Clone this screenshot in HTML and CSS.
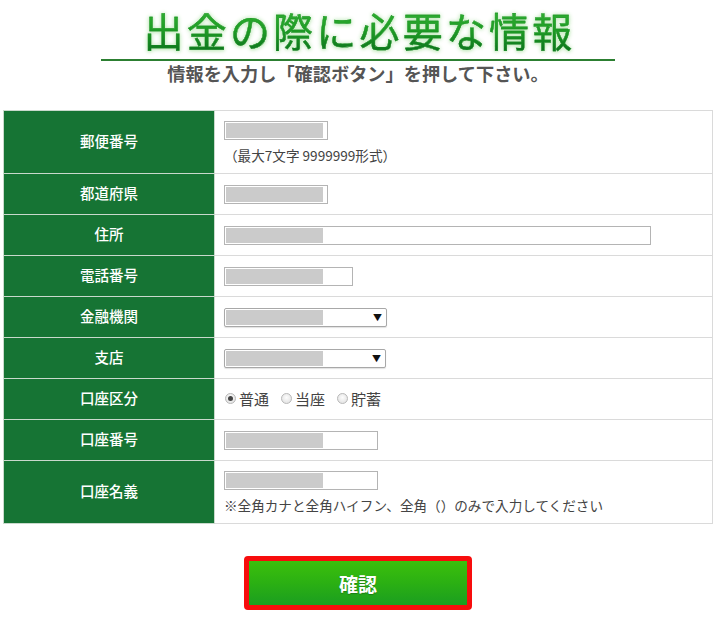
FILE: index.html
```html
<!DOCTYPE html>
<html lang="ja">
<head>
  <meta charset="UTF-8" />
  <title>出金の際に必要な情報</title>
  <link rel="stylesheet" href="styles.css">
</head>
<body>
  <header class="page-head">
    <h1 class="title"><span class="title-text">出金の際に必要な情報</span></h1>
    <p class="lead">情報を入力し「確認ボタン」を押して下さい。</p>
  </header>

  <form class="withdraw-form">
    <table class="info-table">
      <tr class="tall">
        <th>郵便番号</th>
        <td>
          <span class="field w104"><span class="mask"></span></span>
          <p class="note">（最大7文字 9999999形式）</p>
        </td>
      </tr>
      <tr>
        <th>都道府県</th>
        <td><span class="field w104"><span class="mask"></span></span></td>
      </tr>
      <tr>
        <th>住所</th>
        <td><span class="field w427"><span class="mask"></span></span></td>
      </tr>
      <tr>
        <th>電話番号</th>
        <td><span class="field w129"><span class="mask"></span></span></td>
      </tr>
      <tr>
        <th>金融機関</th>
        <td><span class="field select w163"><span class="mask"></span><span class="arrow">▼</span></span></td>
      </tr>
      <tr>
        <th>支店</th>
        <td><span class="field select w162"><span class="mask"></span><span class="arrow">▼</span></span></td>
      </tr>
      <tr>
        <th>口座区分</th>
        <td>
          <div class="radios">
            <label class="radio checked"><span class="dot"></span>普通</label>
            <label class="radio"><span class="dot"></span>当座</label>
            <label class="radio"><span class="dot"></span>貯蓄</label>
          </div>
        </td>
      </tr>
      <tr>
        <th>口座番号</th>
        <td><span class="field w154"><span class="mask"></span></span></td>
      </tr>
      <tr class="tall">
        <th>口座名義</th>
        <td>
          <span class="field w154"><span class="mask"></span></span>
          <p class="note">※全角カナと全角ハイフン、全角（）のみで入力してください</p>
        </td>
      </tr>
    </table>

    <div class="actions">
      <button type="button" class="confirm-btn">確認</button>
    </div>
  </form>
</body>
</html>
```

FILE: styles.css
```css
* {
  margin: 0;
  padding: 0;
  box-sizing: border-box;
}

body {
  background: #ffffff;
  color: #333;
  font-family: "Noto Sans CJK JP", "Noto Sans", sans-serif;
  padding: 0 3px;
}

.page-head {
  text-align: center;
}

.title {
  width: 514px;
  margin: 0 auto;
  padding: 1px 0 0 3px;
  border-bottom: 2px solid #2c7f31;
  font-size: 40px;
  font-weight: 400;
  letter-spacing: 3.2px;
  line-height: normal;
}

.title-text {
  background: linear-gradient(to bottom, #38b838 0%, #1f9c25 50%, #07661b 100%);
  -webkit-background-clip: text;
  background-clip: text;
  color: transparent;
  -webkit-text-stroke: 0.3px #1a8f24;
  filter: drop-shadow(0 0 2px #c2e9bd) drop-shadow(0 1px 1px #d6f1d0);
}

.lead {
  margin-top: 0;
  font-size: 18.2px;
  font-weight: bold;
  color: #555;
  line-height: 24px;
}

.withdraw-form {
  margin-top: 25px;
}

.info-table {
  width: 710px;
  border-collapse: collapse;
  font-size: 14px;
}

.info-table th,
.info-table td {
  border: 1px solid #dadada;
  height: 41px;
  vertical-align: middle;
}

.info-table tr.tall th,
.info-table tr.tall td {
  height: 63px;
}

.info-table th {
  width: 211px;
  padding-bottom: 3px;
  background: #167434;
  color: #fff;
  font-size: 14.5px;
  font-weight: 500;
  border-color: #c9d9cc;
}

.info-table td {
  padding: 7px 9px 6px;
  color: #444;
}

.field {
  display: block;
  position: relative;
  height: 19px;
  border: 1px solid #b4b4b4;
  background: #fff;
}

.mask {
  display: block;
  width: 97px;
  height: 15px;
  margin: 1px 0 0 1px;
  background: #cbcbcb;
}

.select {
  border-color: #a8a8a8;
  border-radius: 2px;
  box-shadow: 0 1px 1px rgba(0, 0, 0, 0.12);
}

.arrow {
  position: absolute;
  right: 4px;
  top: 1px;
  font-size: 9px;
  line-height: 15px;
  color: #111;
}

.w104 { width: 104px; }
.w427 { width: 427px; }
.w129 { width: 129px; }
.w163 { width: 163px; }
.w162 { width: 162px; }
.w154 { width: 154px; }

.note {
  margin-top: 6px;
  line-height: 18px;
  font-size: 13.6px;
}

.radios {
  display: flex;
  gap: 12px;
  padding-left: 1px;
  padding-bottom: 2px;
  font-size: 15px;
  line-height: 20px;
}

.radio {
  display: flex;
  align-items: center;
  gap: 3px;
}

.dot {
  width: 11px;
  height: 11px;
  border-radius: 50%;
  border: 1px solid #b9b9b9;
  background: radial-gradient(circle at 50% 40%, #fdfdfd, #dcdcdc);
  position: relative;
}

.checked .dot::after {
  content: "";
  position: absolute;
  left: 2px;
  top: 2px;
  width: 5px;
  height: 5px;
  border-radius: 50%;
  background: #444;
}

.actions {
  margin-top: 32px;
  display: flex;
  justify-content: center;
}

.confirm-btn {
  width: 228px;
  height: 54px;
  border: 5px solid #f70d0d;
  border-radius: 4px;
  background: linear-gradient(to bottom, #3cc00c 0%, #2bb013 50%, #1b9e20 100%);
  color: #fff;
  font-family: "Noto Sans CJK JP", sans-serif;
  font-size: 19px;
  font-weight: bold;
  text-shadow: 0 1px 1px rgba(0, 0, 0, 0.25);
  cursor: pointer;
}
```
